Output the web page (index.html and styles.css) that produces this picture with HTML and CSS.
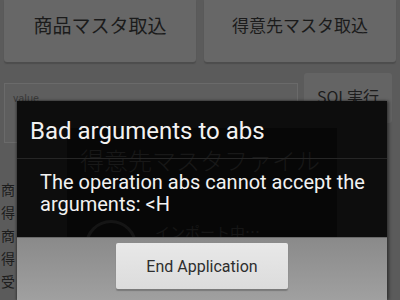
FILE: index.html
```html
<!DOCTYPE html>
<html lang="ja">
<head>
  <meta charset="UTF-8" />
  <title>マスタ取込</title>
  <link rel="stylesheet" href="styles.css">
</head>
<body>

  <!-- 背面の画面（ダイアログで暗くなっている） -->
  <div class="screen">
    <div class="top-row">
      <button class="big-btn">商品マスタ取込</button>
      <button class="big-btn big-btn-small">得意先マスタ取込</button>
    </div>

    <div class="query-row">
      <div class="query-box">
        <span class="hint">value</span>
      </div>
      <button class="sql-btn">SQL実行</button>
    </div>

    <!-- ダイアログに隠れていない先頭の一文字だけ見える -->
    <ul class="labels">
      <li>商</li>
      <li>得</li>
      <li>商</li>
      <li>得</li>
      <li>受</li>
    </ul>
  </div>

  <!-- エラーダイアログ -->
  <div class="dialog">
    <!-- 後ろの進捗ダイアログが透けて見える部分 -->
    <div class="ghost">
      <div class="ghost-panel">
        <span class="ghost-title">得意先マスタファイル</span>
        <span class="ghost-spinner"></span>
        <span class="ghost-text">インポート中…</span>
      </div>
    </div>

    <div class="dialog-title">Bad arguments to abs</div>
    <div class="dialog-body">
      The operation abs cannot accept the arguments: &lt;H
    </div>
    <div class="dialog-buttons">
      <button class="end-btn">End Application</button>
    </div>
  </div>

</body>
</html>
```

FILE: styles.css
```css
/* リセット */
* {
  margin: 0;
  padding: 0;
  box-sizing: border-box;
}
body {
  width: 400px;
  height: 300px;
  overflow: hidden;
  position: relative;
  background: #5b5b5b;
  font-family: "Roboto", "Noto Sans CJK JP", sans-serif;
}

/* 背面の画面 */
.screen {
  color: #1d1d1d;
}
.top-row {
  display: flex;
  gap: 8px;
  padding: 0 4px;
}
.big-btn {
  flex: 1;
  height: 62px;
  border: none;
  border-radius: 0 0 3px 3px;
  background: #676767;
  box-shadow: 0 2px 1px #4d4d4d;
  color: #1b1b1b;
  font-family: "Noto Sans CJK JP", sans-serif;
  font-size: 19px;
  padding-bottom: 14px;
}
.big-btn-small {
  font-size: 17px;
}

.query-row {
  display: flex;
  align-items: flex-start;
  gap: 6px;
  padding: 11px 8px 0 4px;
}
.query-box {
  flex: 1;
  height: 60px;
  margin-top: 10px;
  border: 1px solid #6a6a6a;
  background: #5e5e5e;
  padding: 7px 0 0 8px;
  line-height: 11px;
}
.hint {
  font-size: 11px;
  color: #3a3a3a;
}
.sql-btn {
  width: 88px;
  height: 50px;
  border: none;
  border-radius: 3px;
  background: #646464;
  color: #1d1d1d;
  font-family: "Noto Sans CJK JP", sans-serif;
  font-size: 16px;
  padding-bottom: 4px;
}

.labels {
  list-style: none;
  margin-top: 35px;
  padding-left: 1px;
  font-family: "Noto Sans CJK JP", sans-serif;
  font-size: 14px;
  line-height: 23px;
}

/* エラーダイアログ */
.dialog {
  position: absolute;
  left: 17px;
  top: 101px;
  width: 370px;
  height: 199px;
  background: #0d0d0d;
  color: #f2f2f2;
  box-shadow: 2px 0 3px rgba(0, 0, 0, 0.45), -1px 0 2px rgba(0, 0, 0, 0.35);
}
.ghost {
  position: absolute;
  inset: 0;
  overflow: hidden;
  font-family: "Noto Sans CJK JP", sans-serif;
}
.ghost-panel {
  position: absolute;
  left: 50px;
  top: 27px;
  width: 270px;
  height: 110px;
  background: #070707;
}
.ghost-title {
  position: absolute;
  left: 13px;
  top: 21px;
  font-size: 24px;
  line-height: 22px;
  font-weight: 300;
  color: #181818;
  white-space: nowrap;
}
.ghost-spinner {
  position: absolute;
  left: 18px;
  top: 92px;
  width: 52px;
  height: 52px;
  border: 3px solid #151515;
  border-radius: 50%;
}
.ghost-text {
  position: absolute;
  left: 88px;
  top: 96px;
  font-size: 15px;
  line-height: 15px;
  color: #161616;
  white-space: nowrap;
}

.dialog-title,
.dialog-body,
.dialog-buttons {
  position: relative;
}
.dialog-title {
  height: 58px;
  padding: 16px 0 0 13px;
  font-size: 24px;
  border-bottom: 1px solid #262626;
}
.dialog-body {
  height: 78px;
  padding: 12px 14px 0 23px;
  font-size: 20px;
  line-height: 22px;
}
.dialog-buttons {
  height: 63px;
  display: flex;
  justify-content: center;
  align-items: flex-start;
  padding-top: 5px;
  background: linear-gradient(#8a8a8a, #a0a0a0);
  border-top: 1px solid #6a6a6a;
}
.end-btn {
  width: 172px;
  height: 46px;
  border: none;
  border-radius: 2px;
  background: linear-gradient(#e8e8e8, #dcdcdc);
  box-shadow: 0 2px 1px #7a7a7a, 0 0 1px #888;
  color: #2e2e2e;
  font-family: "Roboto", sans-serif;
  font-size: 16px;
}
```
